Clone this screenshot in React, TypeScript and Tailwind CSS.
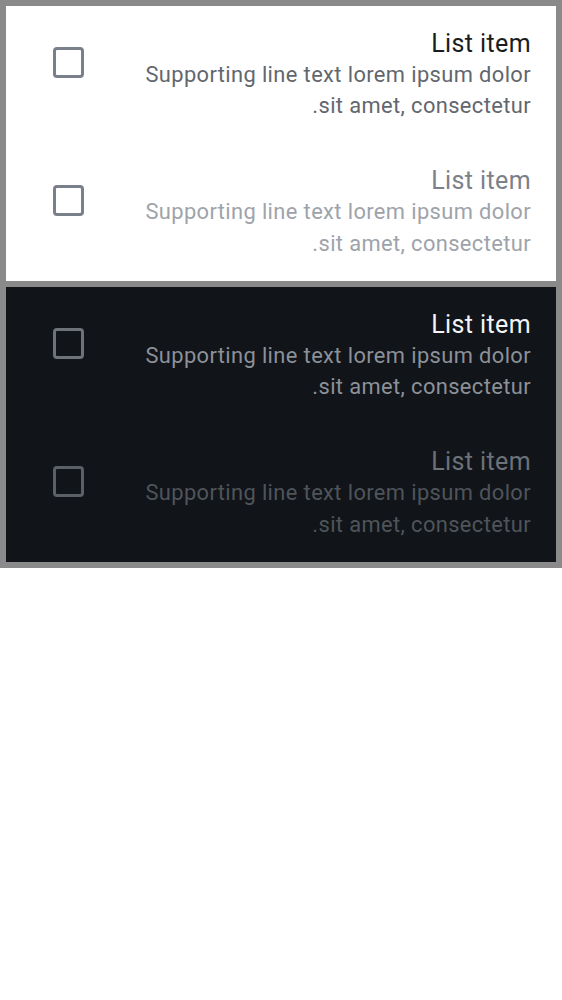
import React from "react";

type Item = { disabled: boolean };

const items: Item[] = [{ disabled: false }, { disabled: true }];

function Checkbox({ color }: { color: string }) {
  return (
    <div
      className="w-[31px] h-[31px] rounded-[4px] border-[3px] box-border"
      style={{ borderColor: color }}
    />
  );
}

function Panel({ dark }: { dark: boolean }) {
  return (
    <div className={dark ? "bg-[#111418]" : "bg-white"}>
      {items.map((it, i) => {
        const title = dark
          ? it.disabled
            ? "text-[#6d7178]"
            : "text-[#f3f4f6]"
          : it.disabled
          ? "text-[#7b8089]"
          : "text-[#1a1c1e]";
        const sub = dark
          ? it.disabled
            ? "text-[#4f545b]"
            : "text-[#8c9199]"
          : it.disabled
          ? "text-[#9ea3aa]"
          : "text-[#62676e]";
        const box = dark
          ? it.disabled
            ? "#5b6067"
            : "#6e737a"
          : "#7a808a";
        return (
          <div
            key={i}
            dir="rtl"
            className="h-[137.5px] flex flex-row justify-between items-start pr-[25px] pl-[47px] pt-[21.5px]"
          >
            <div className="w-[400px] text-right">
              <div
                className={`text-[25px] leading-[31.25px] tracking-[0.4px] ${title}`}
              >
                List item
              </div>
              <div
                className={`text-[21.875px] leading-[31.25px] tracking-[0.39px] ${sub}`}
              >
                Supporting line text lorem ipsum dolor sit amet, consectetur.
              </div>
            </div>
            <div className="mt-[19.5px]">
              <Checkbox color={box} />
            </div>
          </div>
        );
      })}
    </div>
  );
}

export default function App() {
  return (
    <div
      className="w-[562px] bg-white"
      style={{ fontFamily: "Roboto, 'Noto Sans', sans-serif" }}
    >
      <div className="bg-[#8a8a8a] p-[6px] flex flex-col gap-[6px]">
        <Panel dark={false} />
        <Panel dark={true} />
      </div>
    </div>
  );
}
